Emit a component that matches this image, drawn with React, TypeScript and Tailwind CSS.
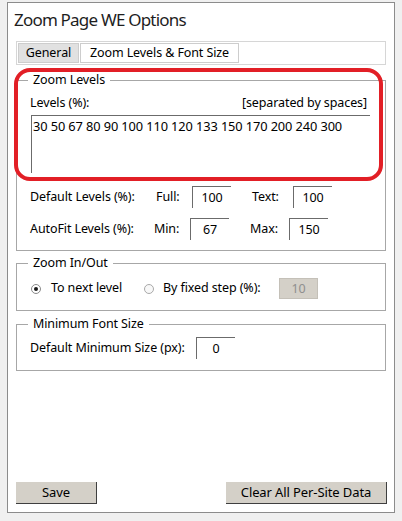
import { useState } from "react";

const font = { fontFamily: '"Noto Sans", "Open Sans", sans-serif' };

const sunken =
  "h-[22px] border-t border-l border-[#6b6b6b] border-r-[#dadada] border-b-[#dadada] bg-white text-center text-[12.5px] outline-none";

const NumBox = ({ value, className = "" }: { value: string; className?: string }) => (
  <input readOnly value={value} className={`${sunken} w-[39px] ${className}`} style={font} />
);

const Radio = ({ checked }: { checked: boolean }) => (
  <span
    className={`flex h-[10px] w-[10px] items-center justify-center rounded-full border ${
      checked ? "border-[#8a8a8a] bg-white" : "border-[#a9a9a9] bg-[#f8f8f8]"
    }`}
  >
    {checked && <span className="h-[4px] w-[4px] rounded-full bg-[#1a1a1a]" />}
  </span>
);

const Group = ({ title, className = "", children }: { title: string; className?: string; children: React.ReactNode }) => (
  <fieldset className={`border border-[#a7a7a7] pl-[13px] ${className}`}>
    <legend className="ml-[-2px] px-[5px] text-[12.5px] leading-[18px]">{title}</legend>
    {children}
  </fieldset>
);

export default function App() {
  const [step, setStep] = useState<"next" | "fixed">("next");

  return (
    <div className="h-[521px] w-[402px] bg-[#f0f0f0] pl-[7px] pt-[2px] text-black" style={font}>
      <div className="relative flex h-[511px] w-[388px] flex-col border border-[#8c8c8c] bg-white px-[8px] text-[12.5px] tracking-[-0.1px]">
        <h1 className="ml-[-2px] pt-[5px] text-[17px] font-normal leading-[24px] tracking-[-0.8px] text-[#1e1e1e]">
          Zoom Page WE Options
        </h1>

        {/* tab strip */}
        <div className="mt-[9px] flex h-[24px] gap-[1px] border border-[#d6d6d6] p-[1px] leading-[18px]">
          <button className="h-[20px] w-[61px] border border-[#cdcdcd] bg-[#e1e1e1]">General</button>
          <button className="h-[20px] w-[159px] border border-[#cdcdcd] bg-white">Zoom Levels &amp; Font Size</button>
        </div>

        <Group title="Zoom Levels" className="mt-[6px] pb-[10px]">
          <div className="mt-[5px] flex w-[337px] justify-between leading-[18px]">
            <span>Levels (%):</span>
            <span>[separated by spaces]</span>
          </div>
          <textarea
            readOnly
            defaultValue="30 50 67 80 90 100 110 120 133 150 170 200 240 300"
            className="ml-[1px] mt-[3px] block h-[58px] w-[339px] resize-none border-t border-l border-[#6b6b6b] border-r-[#dadada] border-b-[#dadada] px-[1px] pt-[1px] text-[12.8px] leading-[18px] outline-none"
            style={font}
          />
          <div className="mt-[13px] flex items-center">
            <span className="w-[126px]">Default Levels (%):</span>
            <span className="w-[36px]">Full:</span>
            <NumBox value="100" />
            <span className="ml-[21px] w-[41px]">Text:</span>
            <NumBox value="100" />
          </div>
          <div className="mt-[10px] flex items-center">
            <span className="w-[124px]">AutoFit Levels (%):</span>
            <span className="w-[36px]">Min:</span>
            <NumBox value="67" />
            <span className="ml-[21px] w-[39px]">Max:</span>
            <NumBox value="150" />
          </div>
        </Group>

        <Group title="Zoom In/Out" className="mt-[3px] pb-[11px]">
          <div className="mt-[6px] flex h-[21px] items-center">
            <label className="flex w-[114px] items-center" onClick={() => setStep("next")}>
              <span className="ml-[1px]">
                <Radio checked={step === "next"} />
              </span>
              <span className="ml-[10px]">To next level</span>
            </label>
            <label className="flex w-[135px] items-center" onClick={() => setStep("fixed")}>
              <Radio checked={step === "fixed"} />
              <span className="ml-[9px]">By fixed step (%):</span>
            </label>
            <input
              readOnly
              value="10"
              className="h-[21px] w-[39px] border border-[#c4c0b8] bg-[#d4d0c8] text-center text-[12.5px] text-[#8f8f8f] outline-none"
              style={font}
            />
          </div>
        </Group>

        <Group title="Minimum Font Size" className="mt-[4px] pb-[11px]">
          <div className="mt-[4px] flex items-center">
            <span className="w-[166px]">Default Minimum Size (px):</span>
            <NumBox value="0" />
          </div>
        </Group>

        <div className="mb-[8px] mr-[-1px] mt-auto flex justify-between text-[13px]">
          <button className="h-[22px] w-[81px] border-r border-b border-[#3f3f3f] bg-[#d4d0c8]">Save</button>
          <button className="h-[22px] w-[161px] border-r border-b border-[#3f3f3f] bg-[#d4d0c8]">
            Clear All Per-Site Data
          </button>
        </div>

        {/* red highlight around the zoom levels group */}
        <div className="pointer-events-none absolute left-[6px] top-[65px] h-[113px] w-[369px] rounded-[16px] border-4 border-[#e21f26]" />
      </div>
    </div>
  );
}
